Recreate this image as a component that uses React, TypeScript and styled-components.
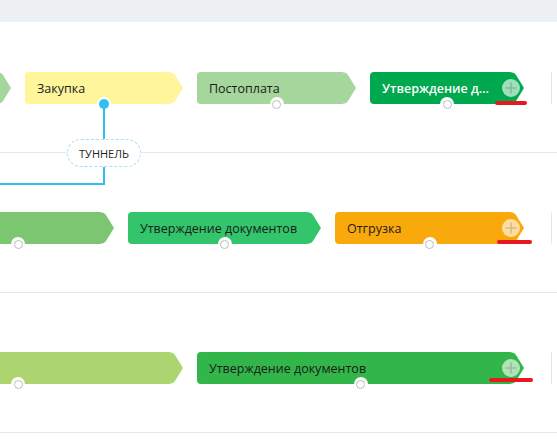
import React, { FC, ReactElement } from 'react';
import styled, { createGlobalStyle } from 'styled-components';

const GlobalStyle = createGlobalStyle`
    html, body {
        margin: 0;
        padding: 0;
        background: #ffffff;
        font-family: 'Open Sans', 'Noto Sans', sans-serif;
    }
`;

const Board = styled.div`
    position: relative;
    width: 557px;
    height: 442px;
    overflow: hidden;
    background: #ffffff;
`;

const TopBar = styled.div`
    height: 22px;
    background: #edf0f3;
`;

const Row = styled.div<{ $height: number; $top: number }>`
    height: ${({ $height }) => $height}px;
    padding-top: ${({ $top }) => $top}px;
    box-sizing: border-box;
    border-bottom: 1px solid #e9e9e9;
    overflow: hidden;
`;

const Lane = styled.div<{ $offset: number }>`
    display: flex;
    align-items: flex-start;
    gap: 14px;
    margin-left: ${({ $offset }) => $offset}px;
`;

const StageWrap = styled.div<{ $width: number }>`
    position: relative;
    flex: 0 0 ${({ $width }) => $width}px;
    width: ${({ $width }) => $width}px;
    min-width: 0;
    height: 32px;
`;

const StageBody = styled.div<{ $color: string; $light?: boolean; $withPlus?: boolean }>`
    display: flex;
    align-items: center;
    height: 100%;
    padding: 0 ${({ $withPlus }) => ($withPlus ? 30 : 14)}px 0 12px;
    box-sizing: border-box;
    background: ${({ $color }) => $color};
    border-radius: 4px 0 0 4px;
    clip-path: polygon(
        0 0,
        calc(100% - 14px) 0,
        calc(100% - 10px) 1px,
        calc(100% - 8px) 3px,
        100% 50%,
        calc(100% - 8px) calc(100% - 3px),
        calc(100% - 10px) calc(100% - 1px),
        calc(100% - 14px) 100%,
        0 100%
    );
    color: ${({ $light }) => ($light ? '#ffffff' : '#1b1b1b')};
    font-size: 12.5px;
    font-weight: ${({ $light }) => ($light ? 600 : 500)};
`;

const Label = styled.span`
    min-width: 0;
    overflow: hidden;
    white-space: nowrap;
    text-overflow: ellipsis;
`;

const Dot = styled.span<{ $active?: boolean }>`
    position: absolute;
    left: 50%;
    bottom: -7px;
    width: 14px;
    height: 14px;
    margin-left: -7px;
    border-radius: 50%;
    background: #ffffff;
    display: flex;
    align-items: center;
    justify-content: center;

    &::after {
        content: '';
        width: ${({ $active }) => ($active ? 10 : 9)}px;
        height: ${({ $active }) => ($active ? 10 : 9)}px;
        border-radius: 50%;
        box-sizing: border-box;
        background: ${({ $active }) => ($active ? '#2ec0f3' : '#ffffff')};
        border: ${({ $active }) => ($active ? 'none' : '1.5px solid #bdbdbd')};
    }
`;

const PlusButton = styled.span`
    position: absolute;
    right: 4px;
    top: 7px;
    width: 18px;
    height: 18px;
    border-radius: 50%;
    background: rgba(255, 255, 255, 0.62);
    display: flex;
    align-items: center;
    justify-content: center;
`;

const Mark = styled.span<{ $left: number; $width: number; $top: number }>`
    position: absolute;
    left: ${({ $left }) => $left}px;
    top: ${({ $top }) => $top}px;
    width: ${({ $width }) => $width}px;
    height: 4px;
    border-radius: 2px;
    background: #e8191e;
`;

const Divider = styled.div`
    flex: 0 0 1px;
    height: 32px;
    margin-left: 13px;
    background: #e6e6e6;
`;

const TunnelLine = styled.div<{ $vertical?: boolean }>`
    position: absolute;
    background: #2ec0f3;
    ${({ $vertical }) =>
        $vertical
            ? 'left: 103px; top: 104px; width: 2px; height: 81px;'
            : 'left: 0; top: 183px; width: 105px; height: 2px;'}
`;

const TunnelTag = styled.div`
    position: absolute;
    left: 67px;
    top: 139px;
    width: 74px;
    height: 28px;
    box-sizing: border-box;
    border: 1px dashed #a9def5;
    border-radius: 14px;
    background: #ffffff;
    display: flex;
    align-items: center;
    justify-content: center;
    font-size: 11px;
    font-weight: 500;
    color: #1f1f1f;
    text-transform: uppercase;
`;

type Stage = {
    title: string;
    color: string;
    width: number;
    light?: boolean;
    active?: boolean;
    mark?: { left: number; width: number; top: number };
};

type Lane = {
    height: number;
    top: number;
    offset: number;
    stages: Stage[];
};

const lanes: Lane[] = [
    {
        height: 131,
        top: 50,
        offset: -139,
        stages: [
            { title: '', color: '#a5d69b', width: 150 },
            { title: 'Закупка', color: '#fff59b', width: 158, active: true },
            { title: 'Постоплата', color: '#a5d69b', width: 159 },
            {
                title: 'Утверждение документов',
                color: '#00a84e',
                width: 154,
                light: true,
                mark: { left: 125, width: 32, top: 29 },
            },
        ],
    },
    {
        height: 140,
        top: 59,
        offset: -78,
        stages: [
            { title: '', color: '#7cc672', width: 192 },
            { title: 'Утверждение документов', color: '#33c56b', width: 193 },
            {
                title: 'Отгрузка',
                color: '#f9a90b',
                width: 189,
                mark: { left: 162, width: 35, top: 28 },
            },
        ],
    },
    {
        height: 140,
        top: 59,
        offset: -147,
        stages: [
            { title: '', color: '#add56f', width: 330 },
            {
                title: 'Утверждение документов',
                color: '#32b549',
                width: 327,
                mark: { left: 292, width: 44, top: 26 },
            },
        ],
    },
];

const Plus: FC = (): ReactElement => (
    <PlusButton>
        <svg width="12" height="12" viewBox="0 0 12 12">
            <path d="M6 1v10M1 6h10" stroke="rgba(0,0,0,0.16)" strokeWidth="1.6" strokeLinecap="round" />
        </svg>
    </PlusButton>
);

const App: FC = (): ReactElement => (
    <Board>
        <GlobalStyle />
        <TopBar />
        {lanes.map((lane, i) => (
            <Row key={i} $height={lane.height} $top={lane.top}>
                <Lane $offset={lane.offset}>
                    {lane.stages.map((stage, j) => {
                        const last = j === lane.stages.length - 1;
                        return (
                            <StageWrap key={j} $width={stage.width}>
                                <StageBody $color={stage.color} $light={stage.light} $withPlus={last}>
                                    <Label>{stage.title}</Label>
                                </StageBody>
                                <Dot $active={stage.active} />
                                {last && <Plus />}
                                {stage.mark && <Mark $left={stage.mark.left} $width={stage.mark.width} $top={stage.mark.top} />}
                            </StageWrap>
                        );
                    })}
                    <Divider />
                </Lane>
            </Row>
        ))}
        <TunnelLine $vertical />
        <TunnelLine />
        <TunnelTag>Туннель</TunnelTag>
    </Board>
);

export default App;
